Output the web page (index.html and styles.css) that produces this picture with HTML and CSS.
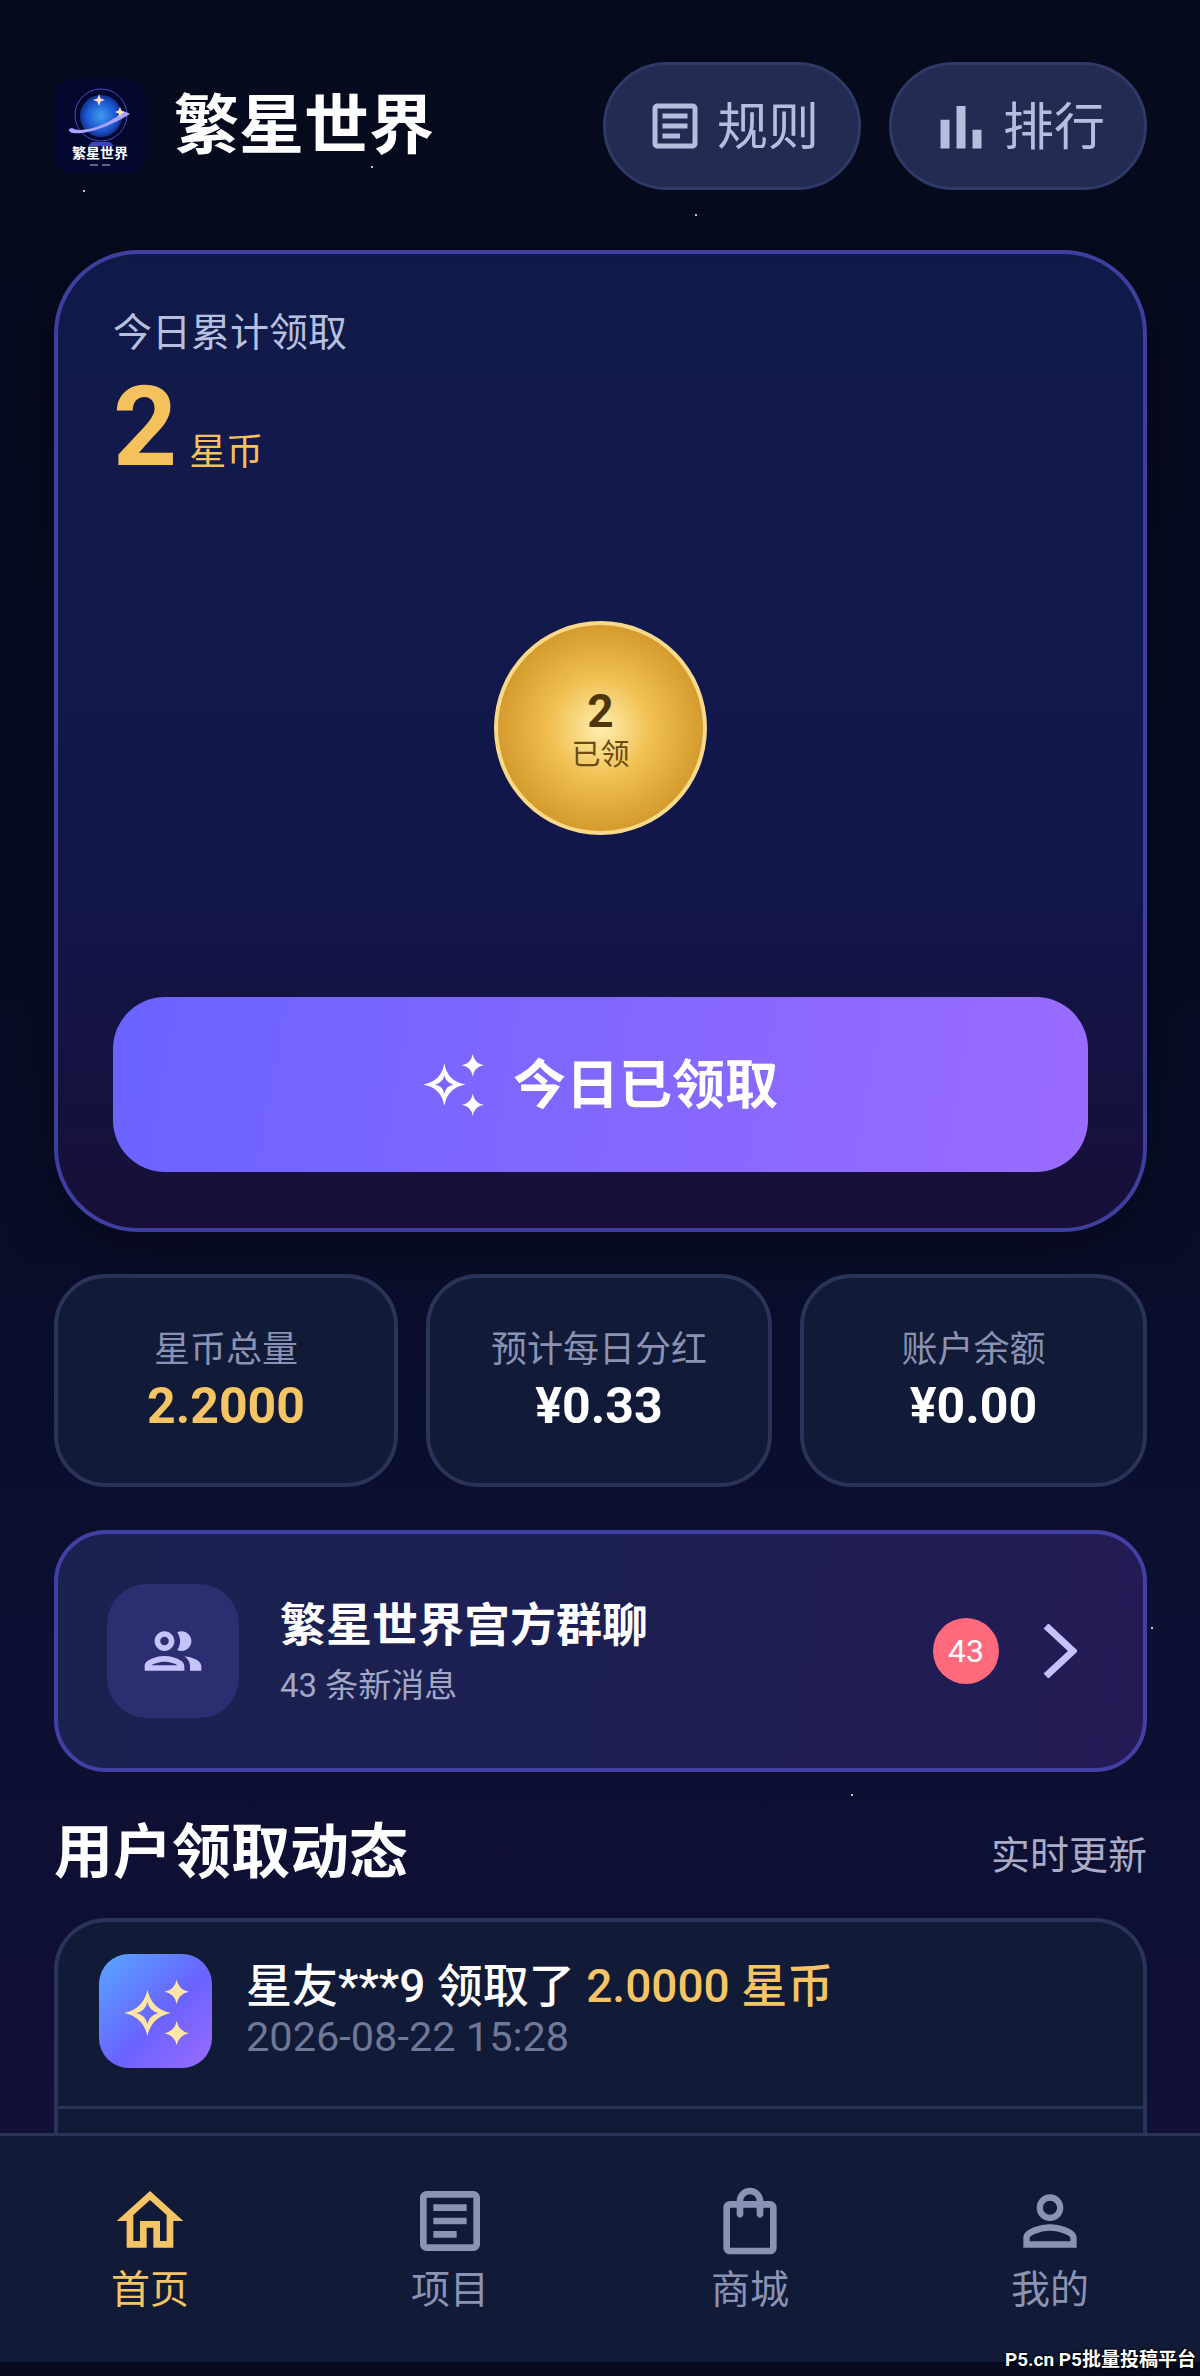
FILE: index.html
```html
<!DOCTYPE html>
<html lang="zh-CN">
<head>
  <meta charset="UTF-8">
  <title>繁星世界</title>
  <link rel="stylesheet" href="styles.css">
</head>
<body>
  <div class="screen">
    <!-- tiny background stars -->
    <i class="star star-1"></i>
    <i class="star star-2"></i>
    <i class="star star-3"></i>
    <i class="star star-4"></i>
    <i class="star star-5"></i>

    <main class="content">
      <header class="top-bar">
        <div class="brand">
          <svg class="logo" viewBox="0 0 92 94">
            <defs>
              <radialGradient id="planet" cx="50%" cy="50%" r="55%">
                <stop offset="0" stop-color="#3f9cf0"/>
                <stop offset="0.65" stop-color="#1a55d0"/>
                <stop offset="1" stop-color="#0f2470"/>
              </radialGradient>
            </defs>
            <rect width="92" height="94" rx="20" fill="#04082e"/>
            <circle cx="47" cy="36" r="26" fill="none" stroke="#4a48c8" stroke-width="1"/>
            <circle cx="47" cy="37" r="21" fill="url(#planet)"/>
            <path d="M15 50C13 58 42 56 76 35C70 31 66 33 66 35C54 46 26 55 18 49z" fill="#a9a2ff"/>
            <path d="M45 15l1.600 4.400 4.400 1.600-4.400 1.600-1.600 4.400-1.600-4.400-4.400-1.600 4.400-1.600z" fill="#ffd9c8"/>
            <path d="M66 28l1.400 3.600 3.600 1.400-3.600 1.400-1.400 3.600-1.400-3.600-3.600-1.400 3.600-1.400z" fill="#ffe9b0"/>
            <path d="M38 63h18l4 4H34z" fill="#3b47b8"/>
            <text class="logo-text" x="46" y="79" text-anchor="middle">繁星世界</text>
            <path d="M36 86h8M48 86h8" stroke="#b9c0e8" stroke-width="1"/>
          </svg>
          <h1 class="brand-name">繁星世界</h1>
        </div>
        <div class="top-actions">
          <a class="pill">
            <svg class="pill-icon" viewBox="0 0 24 24"><path d="M19 5v14H5V5h14m0-2H5c-1.100 0-2 .9-2 2v14c0 1.100.9 2 2 2h14c1.100 0 2-.9 2-2V5c0-1.100-.9-2-2-2z"/><path d="M14 17H7v-2h7v2zm3-4H7v-2h10v2zm0-4H7V7h10v2z"/></svg>
            <span>规则</span>
          </a>
          <a class="pill">
            <svg class="pill-icon" viewBox="0 0 24 24"><path d="M3.800 9.500h3.600V21H3.800zM10.200 4h3.600v17h-3.600zM16.600 13.500h3.600V21h-3.600z"/></svg>
            <span>排行</span>
          </a>
        </div>
      </header>

      <section class="claim-card">
        <div class="claim-label">今日累计领取</div>
        <div class="claim-total"><b>2</b><span>星币</span></div>
        <div class="coin-wrap">
          <div class="coin">
            <b>2</b>
            <span>已领</span>
          </div>
        </div>
        <button class="claim-btn">
          <svg class="btn-icon" viewBox="0 0 64 64">
            <path fill-rule="evenodd" d="M21 11Q24 29 42 32Q24 35 21 53Q18 35 0 32Q18 29 21 11zM21 23Q19.500 30.500 12 32Q19.500 33.500 21 41Q22.500 33.500 30 32Q22.500 30.500 21 23z"/>
            <path d="M49 2Q50.500 11.500 60 13Q50.500 14.500 49 24Q47.500 14.500 38 13Q47.500 11.500 49 2z"/>
            <path d="M49 41Q50.500 50.500 60 52Q50.500 53.500 49 63Q47.500 53.500 38 52Q47.500 50.500 49 41z"/>
          </svg>
          <span>今日已领取</span>
        </button>
      </section>

      <section class="stats">
        <div class="stat">
          <div class="stat-label">星币总量</div>
          <div class="stat-value gold">2.2000</div>
        </div>
        <div class="stat">
          <div class="stat-label">预计每日分红</div>
          <div class="stat-value">¥0.33</div>
        </div>
        <div class="stat">
          <div class="stat-label">账户余额</div>
          <div class="stat-value">¥0.00</div>
        </div>
      </section>

      <section class="chat-card">
        <div class="chat-icon">
          <svg viewBox="0 0 24 24"><path d="M9 13.750c-2.340 0-7 1.170-7 3.500V19h14v-1.750c0-2.330-4.660-3.500-7-3.500zM4.340 17c.84-.58 2.870-1.250 4.660-1.250s3.820.67 4.660 1.250H4.340zM9 12c1.930 0 3.500-1.570 3.500-3.500S10.930 5 9 5 5.500 6.570 5.500 8.500 7.070 12 9 12zm0-5c.83 0 1.500.67 1.500 1.500S9.830 10 9 10s-1.500-.67-1.500-1.500S8.170 7 9 7zm7.040 6.810c1.160.84 1.960 1.960 1.960 3.440V19h4v-1.750c0-2.020-3.500-3.170-5.960-3.440zM15 12c1.930 0 3.500-1.570 3.500-3.500S16.930 5 15 5c-.54 0-1.040.13-1.500.35.63.89 1 1.980 1 3.150s-.37 2.260-1 3.150c.46.22.96.35 1.500.35z"/></svg>
        </div>
        <div class="chat-text">
          <div class="chat-title">繁星世界宫方群聊</div>
          <div class="chat-sub">43 条新消息</div>
        </div>
        <span class="chat-badge">43</span>
        <svg class="chat-arrow" viewBox="0 0 34 54"><path d="M3 2L30 27L3 52"/></svg>
      </section>

      <div class="section-head">
        <h2>用户领取动态</h2>
        <span>实时更新</span>
      </div>

      <section class="feed">
        <div class="feed-row">
          <div class="feed-icon">
            <svg viewBox="0 0 112 112">
              <path fill-rule="evenodd" d="M48 35Q52 54 71 58Q52 62 48 81Q44 62 25 58Q44 54 48 35zM48 47Q46 56 37 58Q46 60 48 69Q50 60 59 58Q50 56 48 47z"/>
              <path d="M77 25Q79 35 89 37Q79 39 77 49Q75 39 65 37Q75 35 77 25z"/>
              <path d="M77 66Q79 76 89 78Q79 80 77 90Q75 80 65 78Q75 76 77 66z"/>
            </svg>
          </div>
          <div class="feed-text">
            <div class="feed-title">星友***9 领取了 <em>2.0000 星币</em></div>
            <div class="feed-time">2026-08-22 15:28</div>
          </div>
        </div>
        <div class="feed-row"></div>
      </section>
    </main>

    <nav class="tab-bar">
      <a class="tab active">
        <svg viewBox="0 0 24 24"><path d="M12 5.690l5 4.500V18h-2v-6H9v6H7v-7.810l5-4.500M12 3L2 12h3v8h6v-6h2v6h6v-8h3L12 3z"/></svg>
        <span>首页</span>
      </a>
      <a class="tab">
        <svg viewBox="0 0 24 24"><path d="M19 5v14H5V5h14m0-2H5c-1.100 0-2 .9-2 2v14c0 1.100.9 2 2 2h14c1.100 0 2-.9 2-2V5c0-1.100-.9-2-2-2z"/><path d="M14 17H7v-2h7v2zm3-4H7v-2h10v2zm0-4H7V7h10v2z"/></svg>
        <span>项目</span>
      </a>
      <a class="tab">
        <svg viewBox="0 0 24 24"><path d="M18 6h-2c0-2.210-1.790-4-4-4S8 3.790 8 6H6c-1.100 0-2 .9-2 2v12c0 1.100.9 2 2 2h12c1.100 0 2-.9 2-2V8c0-1.100-.9-2-2-2zm-6-2c1.100 0 2 .9 2 2h-4c0-1.100.9-2 2-2zm6 16H6V8h2v2c0 .55.45 1 1 1s1-.45 1-1V8h4v2c0 .55.45 1 1 1s1-.45 1-1V8h2v12z"/></svg>
        <span>商城</span>
      </a>
      <a class="tab">
        <svg viewBox="0 0 24 24"><path d="M12 5.900c1.160 0 2.100.94 2.100 2.100s-.94 2.100-2.100 2.100S9.900 9.160 9.900 8s.94-2.100 2.100-2.100m0 9c2.970 0 6.100 1.460 6.100 2.100v1.100H5.900V17c0-.64 3.130-2.100 6.100-2.100M12 4C9.790 4 8 5.790 8 8s1.790 4 4 4 4-1.790 4-4-1.790-4-4-4zm0 9c-2.670 0-8 1.340-8 4v3h16v-3c0-2.660-5.330-4-8-4z"/></svg>
        <span>我的</span>
      </a>
    </nav>

    <div class="watermark">P5.cn P5批量投稿平台</div>
  </div>
</body>
</html>
```

FILE: styles.css
```css
* {
  box-sizing: border-box;
}

body {
  margin: 0;
  font-family: 'Roboto', 'Noto Sans CJK SC', sans-serif;
  color: #fff;
  background: #050a1c;
}

.screen {
  position: relative;
  width: 1200px;
  height: 2376px;
  overflow: hidden;
  display: flex;
  flex-direction: column;
  background: linear-gradient(180deg, #050a1c 0%, #070c24 40%, #0b0f30 65%, #13103a 100%);
}

.star {
  position: absolute;
  width: 2px;
  height: 2px;
  border-radius: 50%;
  background: #fff;
}
.star-1 { left: 83px; top: 190px; }
.star-2 { left: 371px; top: 166px; }
.star-3 { left: 695px; top: 214px; }
.star-4 { left: 1151px; top: 1627px; }
.star-5 { left: 851px; top: 1794px; }

.content {
  flex: 1;
  min-height: 0;
  overflow: hidden;
  padding: 62px 53px 0 54px;
}

/* header */
.top-bar {
  display: flex;
  justify-content: space-between;
  align-items: center;
  height: 128px;
  margin-bottom: 60px;
}

.brand {
  display: flex;
  align-items: center;
  gap: 28px;
}

.logo {
  width: 92px;
  height: 94px;
}

.logo-text {
  font-size: 14px;
  font-weight: 700;
  fill: #fff;
}

.brand-name {
  margin: 0;
  font-size: 65px;
  line-height: 1;
  font-weight: 700;
}

.top-actions {
  display: flex;
  gap: 28px;
}

.pill {
  width: 258px;
  height: 128px;
  display: flex;
  align-items: center;
  justify-content: center;
  gap: 12px;
  border-radius: 64px;
  background: #232b52;
  border: 3px solid #2f3a66;
  color: #b4bfe0;
  font-size: 51px;
}

.pill span {
  padding-bottom: 7px;
}

.pill-icon {
  width: 60px;
  height: 60px;
  fill: #b4bfe0;
}

/* claim card */
.claim-card {
  height: 982px;
  display: flex;
  flex-direction: column;
  padding: 56px 55px 56px;
  border: 4px solid #3f3fa0;
  border-radius: 84px;
  background: linear-gradient(180deg, #101a49 0%, #121a4c 30%, #12164a 65%, #170f38 100%);
  box-shadow: 0 20px 60px rgba(0, 0, 0, 0.35);
}

.claim-label {
  font-size: 39px;
  line-height: 46px;
  color: #b7c0df;
}

.claim-total {
  display: flex;
  align-items: baseline;
  gap: 12px;
  height: 120px;
  margin-top: 11px;
  color: #f5c15c;
}

.claim-total b {
  font-size: 112px;
  line-height: 120px;
  font-weight: 700;
}

.claim-total span {
  font-size: 37px;
}

.coin-wrap {
  flex: 1;
  display: flex;
  align-items: center;
  justify-content: center;
  padding-bottom: 28px;
}

.coin {
  width: 213px;
  height: 214px;
  padding-top: 4px;
  border-radius: 50%;
  display: flex;
  flex-direction: column;
  align-items: center;
  justify-content: center;
  border: 4px solid #f8d98a;
  background: radial-gradient(circle at 50% 50%, #ffeeb0 0%, #f0c050 35%, #d39a2c 72%, #c48a20 100%);
  color: #4f340c;
}

.coin b {
  font-size: 46px;
  line-height: 50px;
  font-weight: 700;
}

.coin span {
  font-size: 29px;
  line-height: 38px;
  color: #6b4a14;
}

.claim-btn {
  height: 175px;
  display: flex;
  align-items: center;
  justify-content: center;
  gap: 25px;
  border: none;
  border-radius: 52px;
  background: linear-gradient(100deg, #6a63ff 0%, #9b6bff 100%);
  color: #fff;
  font-family: inherit;
  font-size: 53px;
  font-weight: 700;
}

.claim-btn span {
  padding-bottom: 7px;
}

.btn-icon {
  width: 65px;
  height: 65px;
  fill: #fff;
}

/* stats */
.stats {
  display: grid;
  grid-template-columns: 344px 346px 347px;
  gap: 28px;
  margin-top: 42px;
}

.stat {
  height: 213px;
  padding-top: 47px;
  text-align: center;
  border: 4px solid #2a3358;
  border-radius: 52px;
  background: #111a36;
}

.stat-label {
  font-size: 36px;
  line-height: 50px;
  color: #8a93b3;
}

.stat-value {
  font-size: 50px;
  line-height: 62px;
  font-weight: 700;
}

.gold {
  color: #f5c565;
}

/* group chat */
.chat-card {
  height: 242px;
  margin-top: 43px;
  display: flex;
  align-items: center;
  padding: 0 66px 0 49px;
  border: 4px solid #4340a5;
  border-radius: 52px;
  background: linear-gradient(100deg, #1a2250 0%, #1c1f52 50%, #241b55 100%);
}

.chat-icon {
  width: 132px;
  height: 134px;
  display: flex;
  align-items: center;
  justify-content: center;
  border-radius: 40px;
  background: #2b2e70;
}

.chat-icon svg {
  width: 68px;
  height: 68px;
  fill: #c4c3fb;
}

.chat-text {
  flex: 1;
  margin-left: 41px;
}

.chat-title {
  font-size: 46px;
  line-height: 64px;
  font-weight: 600;
  margin-bottom: 5px;
}

.chat-sub {
  font-size: 33px;
  line-height: 48px;
  color: #a1a7c6;
}

.chat-badge {
  width: 66px;
  height: 66px;
  line-height: 66px;
  text-align: center;
  border-radius: 50%;
  background: #ff6b7d;
  font-size: 32px;
}

.chat-arrow {
  width: 34px;
  height: 54px;
  margin-left: 44px;
  fill: none;
  stroke: #c4c3fb;
  stroke-width: 7;
}

/* feed */
.section-head {
  display: flex;
  justify-content: space-between;
  align-items: center;
  height: 76px;
  margin-top: 43px;
  margin-bottom: 27px;
}

.section-head h2 {
  margin: 0;
  font-size: 59px;
  font-weight: 700;
  line-height: 76px;
}

.section-head span {
  font-size: 39px;
  padding-bottom: 2px;
  color: #a9adc8;
}

.feed {
  border: 4px solid #2a3358;
  border-bottom: none;
  border-radius: 52px 52px 0 0;
  background: #111a36;
  height: 300px;
}

.feed-row {
  height: 187px;
  display: flex;
  align-items: center;
  gap: 34px;
  padding: 0 0 7px 41px;
  border-bottom: 3px solid #2a3358;
}

.feed-icon {
  width: 113px;
  height: 114px;
  border-radius: 30px;
  background: linear-gradient(135deg, #58a6ff 0%, #6a63ff 55%, #9b6bff 100%);
}

.feed-icon svg {
  display: block;
  width: 113px;
  height: 114px;
  fill: #ffe6a3;
}

.feed-text {
  padding-bottom: 5px;
}

.feed-title {
  font-size: 46px;
  line-height: 58px;
  font-weight: 500;
}

.feed-title em {
  font-style: normal;
  color: #f5c565;
}

.feed-time {
  font-size: 41.5px;
  line-height: 44px;
  color: #6f7896;
}

/* bottom nav */
.tab-bar {
  height: 243px;
  flex-shrink: 0;
  display: grid;
  grid-template-columns: repeat(4, 1fr);
  padding-bottom: 17px;
  border-top: 3px solid #2a3358;
  background: linear-gradient(#111a36 0 226px, #060a1c 226px);
}

.tab {
  display: flex;
  flex-direction: column;
  align-items: center;
  padding-top: 45px;
  color: #8a93b3;
  font-size: 39px;
  line-height: 50px;
}

.tab svg {
  width: 80px;
  height: 80px;
  fill: currentColor;
  margin-bottom: 4px;
}

.tab.active {
  color: #f5c565;
}

.watermark {
  position: absolute;
  right: 4px;
  bottom: 3px;
  font-size: 19px;
  line-height: 26px;
  font-weight: 700;
  color: #fff;
  text-shadow: 0 0 2px #000, 1px 1px 1px #000, -1px -1px 1px #000;
}
```
